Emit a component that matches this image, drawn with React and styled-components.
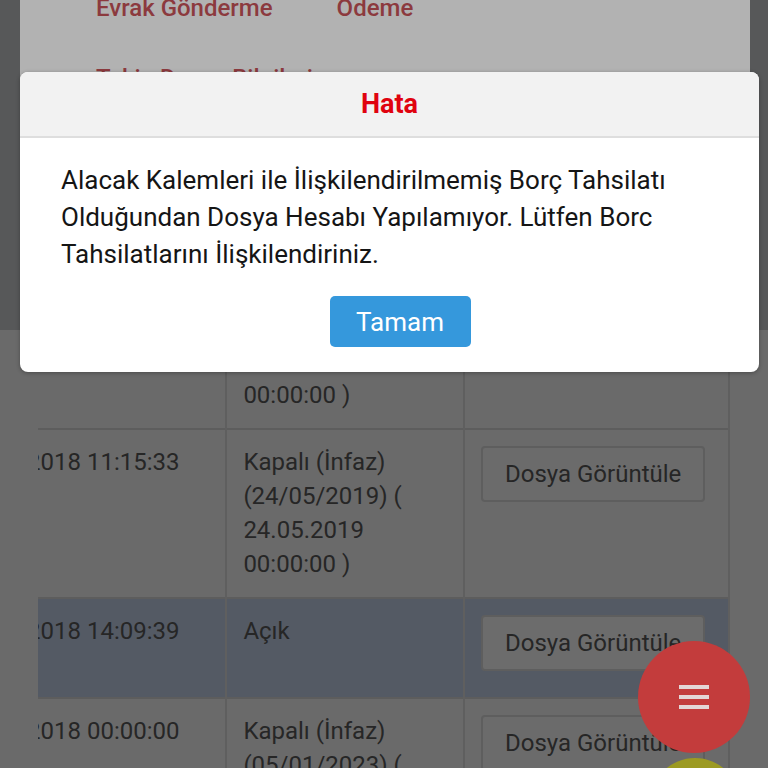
import styled, { createGlobalStyle } from "styled-components";

const Global = createGlobalStyle`
  html, body {
    margin: 0;
    padding: 0;
    background: #6a6a6a;
    font-family: Roboto, "Noto Sans", sans-serif;
  }
`;

const rows = [
    {date: "2018 09:41:12", status: ["Kapalı (İnfaz)", "(12/03/2019) (", "12.03.2019", "00:00:00 )"]},
    {date: "2018 11:15:33", status: ["Kapalı (İnfaz)", "(24/05/2019) (", "24.05.2019", "00:00:00 )"]},
    {date: "2018 14:09:39", status: ["Açık"], active: true},
    {date: "2018 00:00:00", status: ["Kapalı (İnfaz)", "(05/01/2023) (", "05.01.2023", "00:00:00 )"]},
];

const App = () => {
    return (
        <Screen>
            <Global/>
            <MenuBand>
                <MenuPanel>
                    <MenuRow>
                        <MenuLink>Evrak Gönderme</MenuLink>
                        <MenuLink>Ödeme</MenuLink>
                    </MenuRow>
                    <MenuRow>
                        <MenuLink>Takip Dosya Bilgileri</MenuLink>
                    </MenuRow>
                </MenuPanel>
            </MenuBand>
            <TableArea>
                <Scroller>
                    <Table>
                        <tbody>
                        {rows.map((r, i) => (
                            <Row key={i} $active={r.active}>
                                <DateCell>{r.date}</DateCell>
                                <StatusCell>
                                    {r.status.map((s, j) => <div key={j}>{s}</div>)}
                                </StatusCell>
                                <ActionCell>
                                    <ViewButton $active={r.active}>Dosya Görüntüle</ViewButton>
                                </ActionCell>
                            </Row>
                        ))}
                        </tbody>
                    </Table>
                </Scroller>
            </TableArea>

            <Dialog>
                <DialogHead>Hata</DialogHead>
                <DialogBody>
                    <Message>
                        Alacak Kalemleri ile İlişkilendirilmemiş Borç Tahsilatı Olduğundan Dosya Hesabı
                        Yapılamıyor. Lütfen Borc Tahsilatlarını İlişkilendiriniz.
                    </Message>
                    <OkButton>Tamam</OkButton>
                </DialogBody>
            </Dialog>

            <Fab>
                <svg width="32" height="26" viewBox="0 0 32 26">
                    <rect x="1" y="1" width="30" height="4" fill="#e4d6d6"/>
                    <rect x="1" y="11" width="30" height="4" fill="#e4d6d6"/>
                    <rect x="1" y="21" width="30" height="4" fill="#e4d6d6"/>
                </svg>
            </Fab>
            <SubFab/>
        </Screen>
    )
}

const Screen = styled.div`
  position: relative;
  width: 768px;
  height: 768px;
  overflow: hidden;
  background: #6a6a6a;
`
const MenuBand = styled.div`
  background: #575859;
  padding: 0 18px 0 20px;
  height: 330px;
`
const MenuPanel = styled.div`
  background: #b2b2b2;
  height: 100%;
  padding: 0 76px;
  overflow: hidden;
`
const MenuRow = styled.div`
  display: flex;
  gap: 64px;
  height: 70px;
  margin-top: -8px;

  & + & {
    margin-top: 0;
  }
`
const MenuLink = styled.span`
  font-size: 24px;
  font-weight: 500;
  color: #8c3a3e;
  line-height: 32px;
`
const TableArea = styled.div`
  margin-top: -71px;
  padding: 0 38px 0 38px;
`
const Scroller = styled.div`
  overflow: hidden;
  border-right: 2px solid #5f5f5f;
`
const Table = styled.table`
  border-collapse: collapse;
  margin-left: -27px;
  font-size: 24px;
  line-height: 34px;
  color: #262626;
`
const Row = styled.tr`
  background: ${p => p.$active ? "#545a64" : "transparent"};
  border-top: 2px solid #5d5d5d;

  & > td {
    vertical-align: top;
    padding: 15px 16px 16px;
    border-left: 2px solid #5f5f5f;
  }

  & > td:first-child {
    border-left: none;
  }
`
const DateCell = styled.td`
  width: 183px;
  white-space: nowrap;
`
const StatusCell = styled.td`
  width: 205px;
`
const ActionCell = styled.td`
  width: 231px;
`
const ViewButton = styled.div`
  box-sizing: border-box;
  height: 56px;
  width: 224px;
  margin-top: 1px;
  margin-bottom: 10px;
  border: 2px solid #5e5e5e;
  border-radius: 4px;
  background: ${p => p.$active ? "#6c6c6c" : "#6b6b6b"};
  display: flex;
  align-items: center;
  justify-content: center;
  white-space: nowrap;
`
const Dialog = styled.div`
  position: absolute;
  left: 20px;
  top: 72px;
  width: 739px;
  height: 300px;
  border-radius: 8px;
  overflow: hidden;
  background: #fff;
  box-shadow: 0 1px 4px rgba(0, 0, 0, 0.3);
`
const DialogHead = styled.div`
  height: 64px;
  background: #f2f2f2;
  border-bottom: 2px solid #dedede;
  display: flex;
  align-items: center;
  justify-content: center;
  color: #e0030f;
  font-size: 27px;
  font-weight: bold;
`
const DialogBody = styled.div`
  padding: 24px 41px 0;
  display: flex;
  flex-direction: column;
  align-items: center;
`
const Message = styled.p`
  margin: 0;
  align-self: stretch;
  font-size: 26px;
  line-height: 37px;
  color: #151515;
`
const OkButton = styled.div`
  margin-top: 23px;
  margin-left: 21px;
  width: 141px;
  height: 51px;
  border-radius: 5px;
  background: #3598dc;
  color: #fff;
  font-size: 26px;
  display: flex;
  align-items: center;
  justify-content: center;
`
const Fab = styled.div`
  position: absolute;
  left: 638px;
  top: 641px;
  width: 112px;
  height: 112px;
  border-radius: 50%;
  background: #c33c3c;
  display: flex;
  align-items: center;
  justify-content: center;
`
const SubFab = styled.div`
  position: absolute;
  left: 650px;
  top: 758px;
  width: 90px;
  height: 90px;
  border-radius: 50%;
  background: #9c9a22;
`

export default App;
